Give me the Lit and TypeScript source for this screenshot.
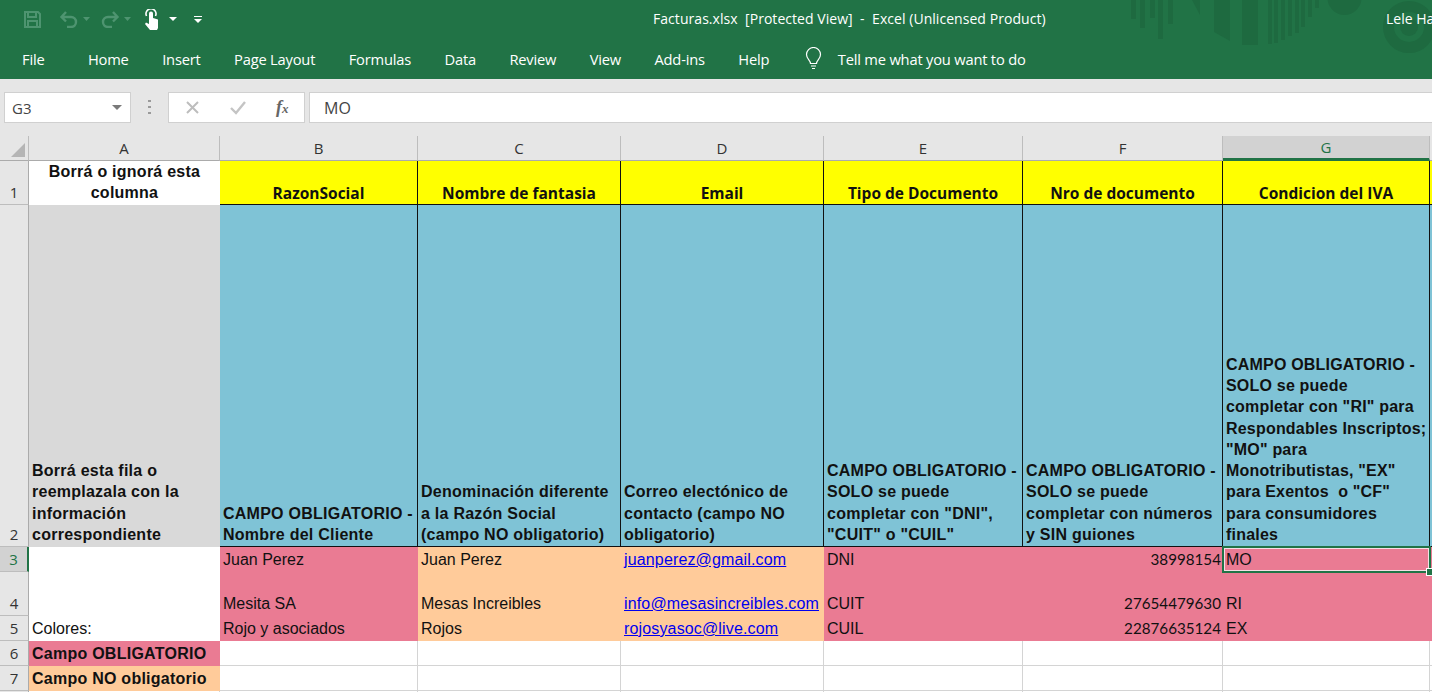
import { LitElement, html, css, svg } from 'lit';
import { customElement } from 'lit/decorators.js';

// the H column is only a sliver at the right edge, so its letter stays empty
const COLS = ['A', 'B', 'C', 'D', 'E', 'F', 'G', ''];
const TABS = ['File', 'Home', 'Insert', 'Page Layout', 'Formulas', 'Data', 'Review', 'View', 'Add-ins', 'Help'];

type Cell = { t?: string; cls?: string; link?: boolean };

// rows are listed top to bottom, heights live in the grid template
const ROWS: { n: string; cells: Cell[]; sel?: boolean }[] = [
  { n: '1', cells: [
    { t: 'Borrá o ignorá esta columna', cls: 'note' },
    { t: 'RazonSocial', cls: 'head' },
    { t: 'Nombre de fantasia', cls: 'head' },
    { t: 'Email', cls: 'head' },
    { t: 'Tipo de Documento', cls: 'head' },
    { t: 'Nro de documento', cls: 'head' },
    { t: 'Condicion del IVA', cls: 'head' },
    { cls: 'head' },
  ] },
  { n: '2', cells: [
    { t: 'Borrá esta fila o reemplazala con la información correspondiente', cls: 'grey bold' },
    { t: 'CAMPO OBLIGATORIO - Nombre del Cliente', cls: 'desc' },
    { t: 'Denominación diferente a la Razón Social (campo NO obligatorio)', cls: 'desc' },
    { t: 'Correo electónico de contacto (campo NO obligatorio)', cls: 'desc' },
    { t: 'CAMPO OBLIGATORIO - SOLO se puede completar con "DNI", "CUIT" o "CUIL"', cls: 'desc' },
    { t: 'CAMPO OBLIGATORIO - SOLO se puede completar con números y SIN guiones', cls: 'desc' },
    { t: 'CAMPO OBLIGATORIO - SOLO se puede completar con "RI" para Respondables Inscriptos; "MO" para Monotributistas, "EX" para Exentos  o "CF" para consumidores finales', cls: 'desc tight' },
    { cls: 'desc' },
  ] },
  { n: '3', sel: true, cells: [
    { cls: 'blank' },
    { t: 'Juan Perez', cls: 'pink' },
    { t: 'Juan Perez', cls: 'peach' },
    { t: 'juanperez@gmail.com', cls: 'peach', link: true },
    { t: 'DNI', cls: 'pink' },
    { t: '38998154', cls: 'pink num' },
    { t: 'MO', cls: 'pink picked' },
    { cls: 'pink' },
  ] },
  { n: '4', cells: [
    { cls: 'blank' },
    { t: 'Mesita SA', cls: 'pink' },
    { t: 'Mesas Increibles', cls: 'peach' },
    { t: 'info@mesasincreibles.com', cls: 'peach', link: true },
    { t: 'CUIT', cls: 'pink' },
    { t: '27654479630', cls: 'pink num' },
    { t: 'RI', cls: 'pink' },
    { cls: 'pink' },
  ] },
  { n: '5', cells: [
    { t: 'Colores:', cls: 'blank' },
    { t: 'Rojo y asociados', cls: 'pink' },
    { t: 'Rojos', cls: 'peach' },
    { t: 'rojosyasoc@live.com', cls: 'peach', link: true },
    { t: 'CUIL', cls: 'pink' },
    { t: '22876635124', cls: 'pink num' },
    { t: 'EX', cls: 'pink' },
    { cls: 'pink' },
  ] },
  { n: '6', cells: [
    { t: 'Campo OBLIGATORIO', cls: 'pink bold' },
    ...Array(7).fill({ cls: 'empty' }),
  ] },
  { n: '7', cells: [
    { t: 'Campo NO obligatorio', cls: 'peach bold' },
    ...Array(7).fill({ cls: 'empty' }),
  ] },
  { n: '', cells: Array(8).fill({ cls: 'empty' }) },
];

@customElement('app-root')
export class AppRoot extends LitElement {
  static styles = css`
    :host {
      display: block;
      width: 1432px;
      height: 692px;
      overflow: hidden;
      background: #e6e6e6;
      font-family: 'Liberation Sans', Arial, sans-serif;
    }
    .ribbon {
      position: relative;
      height: 79px;
      background: #217346;
      color: #fff;
      font-family: 'Open Sans', sans-serif;
      overflow: hidden;
    }
    .art { position: absolute; left: 1120px; top: 0; }
    .title-row {
      position: relative;
      display: flex;
      align-items: center;
      height: 38px;
    }
    .qat {
      display: flex;
      align-items: center;
      width: 640px;
      padding-left: 23px;
      box-sizing: border-box;
    }
    .title {
      margin: 0 0 2px 13px;
      font-size: 14px;
      letter-spacing: 0.05px;
      white-space: pre;
    }
    .user {
      position: absolute;
      left: 1386px;
      top: 9px;
      font-size: 14px;
      white-space: nowrap;
    }
    .tabs {
      position: relative;
      display: flex;
      align-items: center;
      height: 41px;
      padding-left: 22px;
      gap: 33.5px;
      font-size: 14.7px;
      letter-spacing: -0.2px;
    }
    .tabs > span:first-child { margin-right: 10px; }
    .tell {
      display: flex;
      align-items: center;
      gap: 16px;
      margin-left: 2px;
    }
    .fx-bar {
      display: flex;
      align-items: flex-start;
      height: 57px;
      padding-top: 13px;
      box-sizing: border-box;
    }
    .name-box, .fx-btns, .fx-input {
      display: flex;
      align-items: center;
      height: 31px;
      box-sizing: border-box;
      background: #fff;
      border: 1px solid #d0d0d0;
      font-family: 'Open Sans', sans-serif;
      font-size: 15px;
      color: #444;
    }
    .name-box {
      width: 127px;
      margin-left: 4px;
      padding: 0 8px 0 7px;
      justify-content: space-between;
    }
    .caret {
      width: 0;
      height: 0;
      border: 5px solid transparent;
      border-top: 5px solid #7a7a7a;
      border-bottom: 0;
    }
    .dots { display: flex; width: 37px; justify-content: center; padding-top: 8px; box-sizing: border-box; }
    .fx-btns {
      width: 137px;
      padding-left: 16px;
      gap: 29px;
    }
    .fx-label {
      font: italic bold 18px 'Liberation Serif', serif;
      color: #666;
    }
    .fx-label span { font-size: 13px; }
    .fx-input {
      flex: 1;
      margin-left: 4px;
      padding-left: 14px;
      border-right: 0;
      font-size: 16px;
    }
    .sheet {
      display: grid;
      grid-template-columns: 29px 191px 198px 203px 203px 199px 200px 207px 1fr;
      grid-template-rows: 25px 44px 342px 25px 44px 25px 25px 25px 25px;
      height: 556px;
      overflow: hidden;
      background: #fff;
      font-size: 16px;
      color: #111;
    }
    .corner {
      position: relative;
      background: #e6e6e6;
      border-right: 1px solid #bdbdbd;
      border-bottom: 1px solid #ababab;
      box-sizing: border-box;
    }
    .corner::after {
      content: '';
      position: absolute;
      right: 3px;
      bottom: 3px;
      width: 0;
      height: 0;
      border-left: 14px solid transparent;
      border-bottom: 14px solid #b5b5b5;
    }
    .col-h, .row-h {
      display: flex;
      justify-content: center;
      box-sizing: border-box;
      background: #e6e6e6;
      font-family: 'Open Sans', sans-serif;
      font-size: 15px;
      color: #333;
    }
    .col-h {
      align-items: center;
      border-right: 1px solid #bdbdbd;
      border-bottom: 1px solid #ababab;
    }
    .col-h.on {
      background: #d2d2d2;
      color: #217346;
      border-bottom: 3px solid #217346;
    }
    .row-h {
      align-items: flex-end;
      border-bottom: 1px solid #bdbdbd;
      border-right: 1px solid #ababab;
      line-height: 23px;
    }
    .row-h.on {
      background: #d2d2d2;
      color: #217346;
      border-right: 2px solid #217346;
    }
    .cell {
      position: relative;
      display: flex;
      align-items: flex-end;
      box-sizing: border-box;
      padding: 0 3px 2px;
      line-height: 21.25px;
      min-width: 0;
    }
    .note {
      justify-content: center;
      text-align: center;
      font-weight: bold;
      letter-spacing: 0.25px;
      padding: 0 10px 2px;
    }
    .head {
      justify-content: center;
      text-align: center;
      background: #ff0;
      font-family: 'Open Sans', sans-serif;
      font-weight: 700;
      font-size: 15.5px;
      padding-bottom: 0;
      border-right: 1px solid #111;
      border-bottom: 1px solid #111;
      color: #111;
    }
    .grey { background: #d9d9d9; }
    .bold { font-weight: bold; letter-spacing: 0.25px; }
    .desc {
      background: #7fc3d6;
      font-weight: bold;
      letter-spacing: 0.25px;
      white-space: pre-wrap;
      padding: 0 3px 1px 3px;
      border-right: 1px solid #111;
      border-bottom: 1px solid #111;
    }
    .desc.tight { padding-right: 0; letter-spacing: 0.2px; }
    .pink { background: #ea7b93; }
    .peach { background: #ffcb9a; }
    .blank { background: #fff; }
    .empty {
      border-right: 1px solid #d4d4d4;
      border-bottom: 1px solid #d4d4d4;
    }
    .num {
      justify-content: flex-end;
      font-family: 'Lato', sans-serif;
      font-size: 15.2px;
      padding-right: 2px;
    }
    a { color: #0000ee; text-decoration: underline; letter-spacing: 0.15px; }
    /* selection frame sits over the cell edges */
    .picked { z-index: 1; }
    .picked::after {
      content: '';
      position: absolute;
      inset: -1px;
      border: 2px solid #217346;
      box-shadow: inset 0 0 0 1px #f4dfe4;
    }
    .picked::before {
      content: '';
      position: absolute;
      right: -4px;
      bottom: -4px;
      width: 6px;
      height: 6px;
      background: #217346;
      border: 1px solid #fff;
      z-index: 1;
    }
  `;

  private art() {
    const bars = [[148, 44], [154, 43], [161, 40], [168, 36], [175, 33], [181, 27], [188, 17], [195, 8]];
    return html`<svg class="art" width="312" height="79" viewBox="0 0 312 79" fill="#1e6a40">
      ${[[11, 19], [20, 28], [30, 18], [38, 39], [48, 24]].map(
        ([x, h]) => svg`<rect x=${x} y="0" width="5" height=${h}></rect>`
      )}
      <path d="M72 0h8v15z"></path>
      <path d="M94 0h16v41l-16-9z"></path>
      <path d="M122 0h16v45h-16z"></path>
      ${bars.map(([x, h]) => svg`<rect x=${x} y="0" width="4" height=${h}></rect>`)}
      <circle cx="224.5" cy="-2" r="17"></circle>
      <circle cx="289" cy="27" r="20.5" fill="none" stroke="#1e6a40" stroke-width="11"></circle>
      <circle cx="289" cy="27" r="9"></circle>
    </svg>`;
  }

  private qat() {
    return html`
      <svg width="19" height="19" viewBox="0 0 19 19" fill="none" stroke="#4e9470" stroke-width="2">
        <path d="M2 2h13l2 2v13H2z"></path><path d="M5 2v5h8V2M5 17v-6h9v6"></path>
      </svg>
      <svg style="margin-left:17px" width="20" height="18" viewBox="0 0 20 18" fill="none" stroke="#4e9470" stroke-width="2.4">
        <path d="M7 2L2.5 7 7 11.5M3 7h9a5 5 0 0 1 0 10H8"></path>
      </svg>
      <svg style="margin-left:4px" width="7" height="4" viewBox="0 0 7 4" fill="#4e9470"><path d="M0 0h7L3.5 4z"></path></svg>
      <svg style="margin-left:10px" width="20" height="18" viewBox="0 0 20 18" fill="none" stroke="#4e9470" stroke-width="2.4">
        <path d="M13 2l4.5 5L13 11.5M17 7H8a5 5 0 0 0 0 10h4"></path>
      </svg>
      <svg style="margin-left:4px" width="7" height="4" viewBox="0 0 7 4" fill="#4e9470"><path d="M0 0h7L3.5 4z"></path></svg>
      <svg style="margin-left:13px" width="16" height="21" viewBox="0 0 16 21" fill="#fff">
        <path d="M5 9V4.5a2 2 0 0 1 4 0V9l5 1.5V19l-1 2H6l-5-6 1-1.5 3 1.5z"></path>
        <path d="M2.5 7a5 5 0 1 1 9 0" fill="none" stroke="#fff" stroke-width="1.6"></path>
      </svg>
      <svg style="margin-left:9px" width="8" height="4" viewBox="0 0 8 4" fill="#fff"><path d="M0 0h8L4 4z"></path></svg>
      <svg style="margin-left:17px" width="8" height="7" viewBox="0 0 8 7" fill="#fff">
        <path d="M0 0h8v1H0zM0 3h8L4 7z"></path>
      </svg>`;
  }

  private bulb() {
    return html`<svg width="17" height="23" viewBox="0 0 17 23" fill="none" stroke="#fff" stroke-width="1.2">
      <path d="M5.5 16.5c0-3-4-4.5-4-9a7 7 0 0 1 14 0c0 4.5-4 6-4 9z"></path>
      <path d="M6 19h5M7 21.5h3"></path>
    </svg>`;
  }

  render() {
    return html`
      <div class="ribbon">
        ${this.art()}
        <div class="title-row">
          <div class="qat">${this.qat()}</div>
          <span class="title">Facturas.xlsx  [Protected View]  -  Excel (Unlicensed Product)</span>
          <span class="user">Lele Ha</span>
        </div>
        <div class="tabs">
          ${TABS.map(t => html`<span>${t}</span>`)}
          <span class="tell">${this.bulb()}<span>Tell me what you want to do</span></span>
        </div>
      </div>
      <div class="fx-bar">
        <div class="name-box"><span>G3</span><span class="caret"></span></div>
        <div class="dots">
          <svg width="3" height="14" fill="#9a9a9a"><rect y="0" width="3" height="2"></rect><rect y="6" width="3" height="2"></rect><rect y="12" width="3" height="2"></rect></svg>
        </div>
        <div class="fx-btns">
          <svg width="15" height="15" viewBox="0 0 15 15" stroke="#bdbdbd" stroke-width="2"><path d="M2 2l11 11M13 2L2 13"></path></svg>
          <svg width="18" height="15" viewBox="0 0 18 15" fill="none" stroke="#c4c4c4" stroke-width="2.4"><path d="M2 8l5 5L16 2"></path></svg>
          <span class="fx-label">f<span>x</span></span>
        </div>
        <div class="fx-input">MO</div>
      </div>
      <div class="sheet">
        <div class="corner"></div>
        ${COLS.map(c => html`<div class="col-h ${c === 'G' ? 'on' : ''}">${c}</div>`)}
        ${ROWS.map(r => html`
          <div class="row-h ${r.sel ? 'on' : ''}">${r.n}</div>
          ${r.cells.map(c => html`<div class="cell ${c.cls ?? ''}">
            ${c.link ? html`<a>${c.t}</a>` : html`<span>${c.t ?? ''}</span>`}
          </div>`)}
        `)}
      </div>
    `;
  }
}
